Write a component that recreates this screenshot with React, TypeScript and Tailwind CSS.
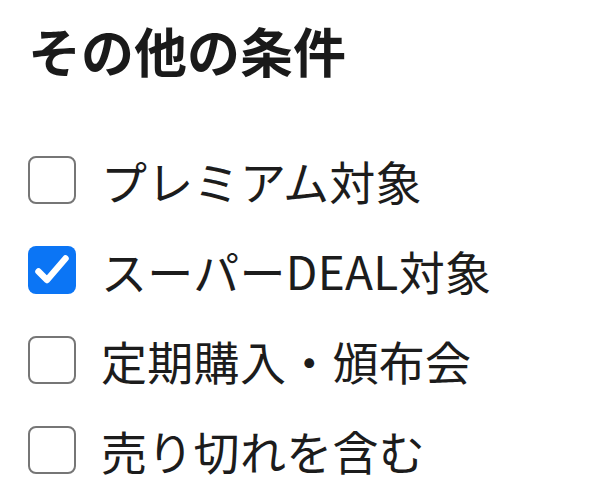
import { useState } from "react";

const options = [
  { id: "premium", label: "プレミアム対象", checked: false },
  { id: "superdeal", label: "スーパーDEAL対象", checked: true },
  { id: "teiki", label: "定期購入・頒布会", checked: false },
  { id: "soldout", label: "売り切れを含む", checked: false },
];

function Box({ checked }: { checked: boolean }) {
  if (checked) {
    return (
      <span className="flex h-[48px] w-[48px] shrink-0 rounded-[8px] bg-[#0b75f5]">
        <svg width="48" height="48" viewBox="0 0 48 48" fill="none">
          <path
            d="M10.5 25.5 L19 34 L37.5 12.5"
            stroke="white"
            strokeWidth="6.5"
            strokeLinecap="round"
            strokeLinejoin="round"
          />
        </svg>
      </span>
    );
  }
  return <span className="h-[48px] w-[48px] shrink-0 rounded-[8px] border-2 border-[#767676] bg-white" />;
}

export default function App() {
  const [items, setItems] = useState(options);

  return (
    <div className="h-[496px] w-[600px] overflow-hidden bg-white pl-[28px] pt-[15px] font-['Noto_Sans_CJK_JP',sans-serif] text-[#1c1c1c]">
      <h2 className="text-[53px] font-bold leading-[70px] text-[#1a1a1a]">その他の条件</h2>
      <ul className="mt-[71px] flex flex-col gap-[42px]">
        {items.map((item) => (
          <li
            key={item.id}
            className="flex h-[48px] cursor-pointer items-center gap-[25px]"
            onClick={() =>
              setItems(items.map((i) => (i.id === item.id ? { ...i, checked: !i.checked } : i)))
            }
          >
            <Box checked={item.checked} />
            <span className="whitespace-nowrap text-[46px] leading-none tracking-[0.3px]">{item.label}</span>
          </li>
        ))}
      </ul>
    </div>
  );
}
